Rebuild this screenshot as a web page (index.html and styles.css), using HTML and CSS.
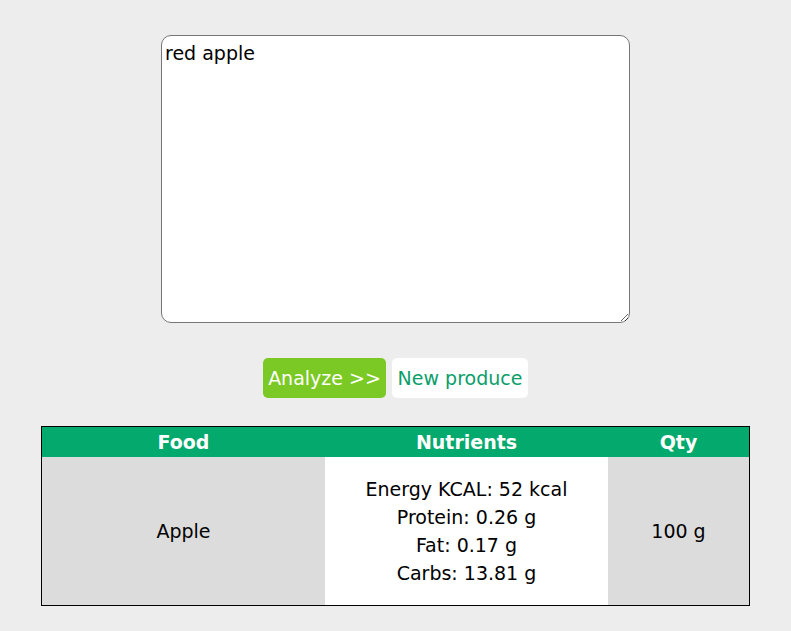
FILE: index.html
```html
<!DOCTYPE html>
<html>
<head>
<meta charset="utf-8">
<link rel="stylesheet" href="styles.css">
</head>
<body>
<div class="page">
  <textarea class="input">red apple</textarea>
  <div class="actions">
    <button class="btn btn-primary">Analyze &gt;&gt;</button>
    <button class="btn btn-secondary">New produce</button>
  </div>
  <table class="results">
    <thead>
      <tr><th class="c-food">Food</th><th class="c-nut">Nutrients</th><th class="c-qty">Qty</th></tr>
    </thead>
    <tbody>
      <tr>
        <td class="c-food">Apple</td>
        <td class="c-nut">Energy KCAL: 52 kcal<br>Protein: 0.26 g<br>Fat: 0.17 g<br>Carbs: 13.81 g</td>
        <td class="c-qty">100 g</td>
      </tr>
    </tbody>
  </table>
</div>
</body>
</html>
```
FILE: styles.css
```css
html, body { margin: 0; padding: 0; }
body {
  background: #ededed;
  font-family: Verdana, "DejaVu Sans", sans-serif;
  color: #000;
}
.page {
  display: flex;
  flex-direction: column;
  align-items: center;
  padding-top: 35px;
}
.input {
  box-sizing: border-box;
  width: 469px;
  height: 288px;
  border: 1px solid #767676;
  border-radius: 10px;
  background: #fff;
  font-family: Verdana, "DejaVu Sans", sans-serif;
  font-size: 19px;
  line-height: 22px;
  padding: 6px 3px;
  margin: 0;
  resize: both;
  display: block;
}
.actions {
  display: flex;
  gap: 6px;
  margin-top: 35px;
}
.btn {
  height: 40px;
  border: none;
  border-radius: 5px;
  font-family: Verdana, "DejaVu Sans", sans-serif;
  font-size: 19px;
  padding: 0;
  margin: 0;
}
.btn-primary { background: #7bc924; color: #fff; width: 123px; }
.btn-secondary { background: #fff; color: #0a9e6a; width: 136px; }
.results {
  margin-top: 28px;
  width: 709px;
  border-collapse: collapse;
  border: 1px solid #000;
  font-size: 19px;
}
.results th {
  background: #04a96d;
  color: #fff;
  font-weight: bold;
  height: 30px;
  padding: 0;
  font-size: 19px;
}
.results td {
  text-align: center;
  padding: 18px 0;
  line-height: 28px;
}
.c-food { width: 283px; }
.c-nut { width: 283px; }
td.c-food, td.c-qty { background: #dcdcdc; }
td.c-nut { background: #fff; }
```
